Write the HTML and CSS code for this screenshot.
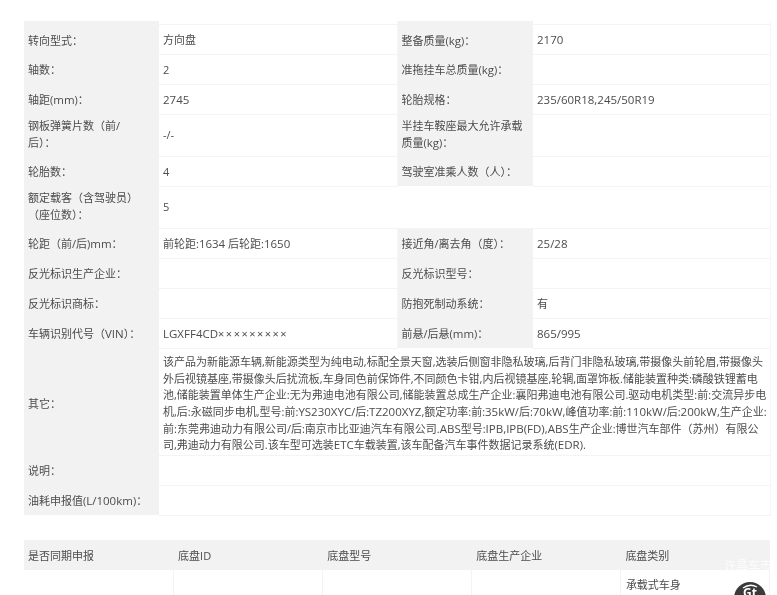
FILE: index.html
```html
<!DOCTYPE html>
<html lang="zh">
<head>
<meta charset="utf-8">
<title>车辆参数</title>
<link rel="stylesheet" href="styles.css">
</head>
<body>
<main class="page">
  <table class="spec">
    <colgroup><col class="c-label"><col class="c-value"><col class="c-label2"><col class="c-value2"></colgroup>
    <tr class="first"><th>转向型式：</th><td>方向盘</td><th>整备质量(<span class="en">kg</span>)：</th><td><span class="en">2170</span></td></tr>
    <tr><th>轴数：</th><td>2</td><th>准拖挂车总质量(<span class="en">kg</span>)：</th><td></td></tr>
    <tr><th>轴距(<span class="en">mm</span>)：</th><td><span class="en">2745</span></td><th>轮胎规格：</th><td><span class="en">235/60R18,245/50R19</span></td></tr>
    <tr class="tall"><th>钢板弹簧片数（前/<br>后）：</th><td>-/-</td><th>半挂车鞍座最大允许承载<br>质量(<span class="en">kg</span>)：</th><td></td></tr>
    <tr><th>轮胎数：</th><td>4</td><th>驾驶室准乘人数（人）：</th><td></td></tr>
    <tr class="tall"><th>额定载客（含驾驶员）<br>（座位数）：</th><td colspan="3">5</td></tr>
    <tr><th>轮距（前/后)<span class="en">mm</span>：</th><td>前轮距:<span class="en">1634</span> 后轮距:<span class="en">1650</span></td><th>接近角/离去角（度）：</th><td><span class="en">25/28</span></td></tr>
    <tr><th>反光标识生产企业：</th><td></td><th>反光标识型号：</th><td></td></tr>
    <tr><th>反光标识商标：</th><td></td><th>防抱死制动系统：</th><td>有</td></tr>
    <tr><th>车辆识别代号（<span class="en">VIN</span>）：</th><td><span class="en">LGXFF4CD</span><span class="mask">×××××××××</span></td><th>前悬/后悬(<span class="en">mm</span>)：</th><td><span class="en">865/995</span></td></tr>
    <tr class="desc"><th>其它：</th><td colspan="3">该产品为新能源车辆,新能源类型为纯电动,标配全景天窗,选装后侧窗非隐私玻璃,后背门非隐私玻璃,带摄像头前轮眉,带摄像头<br>外后视镜基座,带摄像头后扰流板,车身同色前保饰件,不同颜色卡钳,内后视镜基座,轮辋,面罩饰板.储能装置种类:磷酸铁锂蓄电<br>池,储能装置单体生产企业:无为弗迪电池有限公司,储能装置总成生产企业:襄阳弗迪电池有限公司.驱动电机类型:前:交流异步电<br>机,后:永磁同步电机,型号:前:<span class="en">YS230XYC</span>/后:<span class="en">TZ200XYZ</span>,额定功率:前:<span class="en">35kW</span>/后:<span class="en">70kW</span>,峰值功率:前:<span class="en">110kW</span>/后:<span class="en">200kW</span>,生产企业:<br>前:东莞弗迪动力有限公司/后:南京市比亚迪汽车有限公司.<span class="en">ABS</span>型号:<span class="en">IPB,IPB(FD)</span>,<span class="en">ABS</span>生产企业:博世汽车部件（苏州）有限公<br>司,弗迪动力有限公司.该车型可选装<span class="en">ETC</span>车载装置,该车配备汽车事件数据记录系统(<span class="en">EDR</span>).</td></tr>
    <tr><th>说明：</th><td colspan="3"></td></tr>
    <tr><th>油耗申报值(<span class="en">L/100km</span>)：</th><td colspan="3"></td></tr>
  </table>
  <table class="chassis">
    <tr><th>是否同期申报</th><th>底盘ID</th><th>底盘型号</th><th>底盘生产企业</th><th>底盘类别</th></tr>
    <tr><td></td><td></td><td></td><td></td><td>承载式车身</td></tr>
  </table>
</main>
<div class="watermark">许昌车市</div>
<div class="badge">
  <svg class="badge-arc" width="20" height="6" viewBox="0 0 20 6"><path d="M3 5 Q10 0 17 4" fill="none" stroke="#fff" stroke-width="1.3"/></svg>
  <span class="badge-text">Gt</span>
</div>
</body>
</html>
```
FILE: styles.css
```css
html, body {
  margin: 0;
  height: 595px;
  overflow: hidden;
  background: #fff;
}
body {
  position: relative;
  font-family: "Open Sans", "Noto Sans CJK SC", sans-serif;
  font-size: 11px;
  line-height: 16.7px;
  color: #4c4c4c;
}
.page {
  padding: 21px 7px 0 24px;
  filter: blur(0.5px);
}
.en { font-size: 11.5px; }
.mask {
  font-size: 11px;
  letter-spacing: 1.5px;
}
table {
  border-collapse: collapse;
  table-layout: fixed;
  width: 746px;
}
th, td {
  box-sizing: border-box;
  padding: 4px;
  text-align: left;
  font-weight: 400;
  vertical-align: middle;
}
.c-label { width: 135px; }
.c-value { width: 238px; }
.c-label2 { width: 136px; }
.c-value2 { width: 237px; }
.spec tr { height: 30px; }
.spec th {
  background: #f2f2f2;
  padding-top: 6px;
  padding-bottom: 4px;
}
.spec td {
  border-bottom: 1px solid #f4f4f4;
  border-right: 1px solid #f6f6f6;
  padding-top: 6px;
  padding-bottom: 4px;
}
.spec tr.first { height: 33px; }
.spec tr.first th,
.spec tr.first td { padding-top: 11px; }
.spec tr.first td {
  background: linear-gradient(#fff 3px, #f4f4f4 3px, #f4f4f4 4px, #fff 4px);
}
.spec tr.tall { height: 42px; }
.spec tr.tall th,
.spec tr.tall td { padding-top: 4px; padding-bottom: 4px; }
.spec tr.desc { height: 107px; }
.spec tr.desc th,
.spec tr.desc td { padding-top: 5px; padding-bottom: 0; }
.spec tr.desc th { padding-top: 6px; }
.spec tr.desc td {
  line-height: 16.6px;
  white-space: nowrap;
}
.chassis { margin-top: 24px; }
.chassis th {
  height: 30px;
  background: #f2f2f2;
  padding-top: 8px;
}
.chassis th + th { padding-left: 5px; }
.chassis td {
  height: 40px;
  vertical-align: top;
  padding-top: 7px;
  padding-left: 5px;
  border-right: 1px solid #f3f3f3;
}
.watermark {
  position: absolute;
  left: 724px;
  top: 559px;
  font-size: 12px;
  line-height: 14px;
  color: rgba(255, 255, 255, 0.85);
}
.badge {
  position: absolute;
  left: 734px;
  top: 582px;
  width: 32px;
  height: 32px;
  border-radius: 50%;
  background: #3a3a3a;
  color: #fff;
  filter: blur(0.4px);
}
.badge-arc {
  position: absolute;
  left: 6px;
  top: 1px;
}
.badge-text {
  position: absolute;
  left: 9px;
  top: 4px;
  font-size: 12px;
  font-weight: 700;
  line-height: 14px;
}
```
